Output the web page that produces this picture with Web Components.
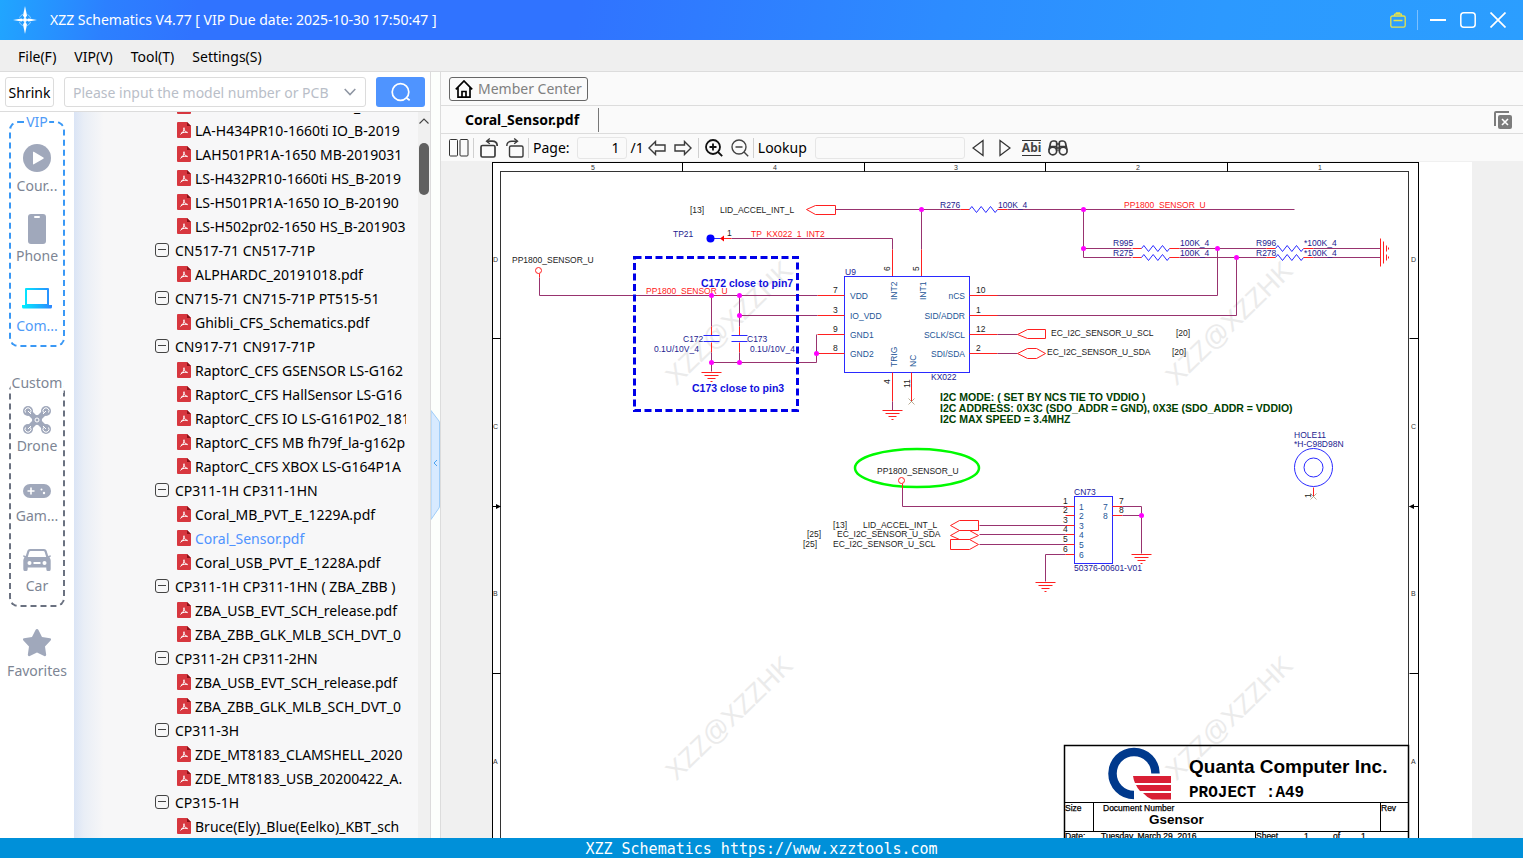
<!DOCTYPE html>
<html lang="en">
<head>
<meta charset="utf-8">
<title>XZZ Schematics</title>
<style>
  html, body { height: 100%; margin: 0; }
  body { font: 14px/20px "Noto Sans", "Open Sans", sans-serif; color: #000; background: #fff; overflow: hidden; }
</style>
</head>
<body>
<xzz-app></xzz-app>

<script>
const define = (name, html, setup) => {
  const template = document.createElement('template');
  template.innerHTML = html;
  customElements.define(name, class extends HTMLElement {
    constructor() {
      super();
      this.attachShadow({ mode: 'open' }).append(template.content.cloneNode(true));
    }
    connectedCallback() {
      if (setup && !this.ready) { this.ready = true; setup(this, this.shadowRoot); }
    }
  });
};

/* ---------- icons ---------- */
const ICONS = {
  logo: ['0 0 24 28', `<g fill="#fff"><path d="M12 0l2 9.5L12 13l-2-3.500z"/><path d="M12 28l2-9.500L12 15l-2 3.500z"/><path d="M0 14l8.500-1.600L11 14l-2.500 1.600z"/><path d="M24 14l-8.500-1.600L13 14l2.500 1.600z"/><circle cx="12" cy="14" r="2"/></g><circle cx="12" cy="14" r="6" fill="none" stroke="#8fd0ff" stroke-width="1" stroke-dasharray="5 4.400" stroke-dashoffset="-2"/>`],
  gift: ['0 0 16 16', `<g fill="none" stroke="#e6e24a" stroke-width="1.300"><rect x=".8" y="4" width="14.400" height="11.200" rx="1.600"/><path d="M4.500 4V2.800q0-.8.800-.8h5.400q.8 0 .8.800V4M6.500 2V.8h3V2M3.500 8.500h9"/></g>`],
  min: ['0 0 16 16', `<path d="M0 8h16" stroke="#fff" stroke-width="2"/>`],
  max: ['0 0 16 16', `<rect x=".8" y=".8" width="14.400" height="14.400" rx="3" fill="none" stroke="#fff" stroke-width="1.500"/>`],
  close: ['0 0 16 16', `<path d="M.5.500l15 15M15.500.500l-15 15" stroke="#fff" stroke-width="1.700"/>`],
  chevron: ['0 0 12 8', `<path d="M.7 1L6 6.600 11.300 1" fill="none" stroke="#8f96a3" stroke-width="1.500"/>`],
  search: ['0 0 20 20', `<g fill="none" stroke="#fff" stroke-width="1.700"><circle cx="9.500" cy="10" r="8.300"/><path d="M15.500 16l3.200 2.300"/></g>`],
  play: ['0 0 28 28', `<circle cx="14" cy="14" r="14" fill="#a0a8bb"/><path d="M10 8.200v11.600q0 .9.800.5l9.600-5.600q.8-.6 0-1.100l-9.600-5.800q-.8-.4-.8.400z" fill="#fff"/>`],
  phone: ['0 0 28 30', `<rect x="5" y="0" width="18" height="30" rx="3" fill="#a0a8bb"/><rect x="11" y="2" width="6" height="2" rx="1" fill="#fff"/>`],
  laptop: ['0 0 30 21', `<defs><linearGradient id="g"><stop offset="0" stop-color="#00f0ff"/><stop offset="1" stop-color="#2d86ff"/></linearGradient></defs><path fill="url(#g)" fill-rule="evenodd" d="M3 1q0-1 1-1h22q1 0 1 1v16H3zM5 2v14h20V2zM0 17h30v2q0 1.500-1.500 1.500h-27Q0 20.500 0 19z"/>`],
  drone: ['0 0 28 28', `<g fill="none" stroke="#a0a8bb"><g stroke-width="5.500" fill="#a0a8bb"><path d="M6 6l16 16M22 6L6 22"/></g><circle cx="14" cy="14" r="5" fill="#a0a8bb" stroke="none"/><circle cx="14" cy="14" r="2" stroke="#fff"/><g fill="#a0a8bb" stroke="none"><circle cx="5" cy="5" r="5"/><circle cx="23" cy="5" r="5"/><circle cx="5" cy="23" r="5"/><circle cx="23" cy="23" r="5"/></g><g stroke="#fff" stroke-width="1"><path d="M2.500 6.500a3 3 0 1 1 5 0M20.500 6.500a3 3 0 1 1 5 0M2.500 21.500a3 3 0 1 0 5 0M20.500 21.500a3 3 0 1 0 5 0M5 5l3 3M23 5l-3 3M5 23l3-3M23 23l-3-3"/></g></g>`],
  game: ['0 0 28 28', `<rect x="0" y="8" width="28" height="14" rx="7" fill="#a0a8bb"/><path d="M8 11.500v7M4.500 15h7" stroke="#fff" stroke-width="1.600"/><circle cx="18.500" cy="13.500" r="1" fill="#fff"/><circle cx="21" cy="17" r="1.200" fill="#fff"/>`],
  car: ['0 0 28 28', `<path fill="#a0a8bb" fill-rule="evenodd" d="M7 3h14q2 0 2.600 1.800L25.200 10l2.300-.8q.7.800 0 1.600l-1 .8q1.200 1.300 1.200 3V23q0 2-1.200 2h-2q-1.200 0-1.200-2v-1.500H4.700V23q0 2-1.200 2h-2Q.3 25 .3 23v-8.400q0-1.700 1.200-3l-1-.8q-.7-.8 0-1.600l2.300.8 1.600-5.200Q5 3 7 3zM7.600 5q-1 0-1.300 1l-1.500 5h18.400l-1.500-5q-.3-1-1.300-1z"/><g fill="#fff"><circle cx="6.500" cy="17" r="2"/><circle cx="21.500" cy="17" r="2"/><rect x="10.500" y="16" width="7" height="2"/></g>`],
  star: ['0 0 28 28', `<path fill="#a0a8bb" d="M14 0q1 0 1.600 1.200L19 8l8 1.300q1.800.7.600 2.200L22 17.500l1.200 8.300q-.2 1.900-2 1.200L14 23.500 6.800 27q-1.800.7-2-1.200L6 17.500.4 11.500Q-.8 10 1 9.300L9 8l3.400-6.800Q13 0 14 0z"/>`],
  pdf: ['0 0 14 16', `<path d="M1 0h9l4 4v11q0 1-1 1H1q-1 0-1-1V1q0-1 1-1z" fill="#d7373f"/><path d="M10 0l4 4h-4z" fill="#8c1219"/><path d="M7 5.500c-.4 2 .2 3.500 3.600 5.200M7 6c.4 2-.6 4-3.600 6.400M4 11.200q3-1.400 6.500-.9" fill="none" stroke="#fff" stroke-width="1"/>`],
  up: ['0 0 10 6', `<path d="M.5 5.500L5 1l4.500 4.500" fill="none" stroke="#444" stroke-width="1.100"/>`],
  home: ['0 0 18 18', `<path d="M.8 9.300L9 1l8.200 8.300M3 7.500v9.700h12V7.500M7 17v-5.500h4V17" fill="none" stroke="#000" stroke-width="1.700"/>`],
  closeall: ['0 0 18 18', `<path d="M1 15V2q0-1 1-1h13" fill="none" stroke="#7c7c7c" stroke-width="2"/><rect x="4" y="4" width="14" height="14" rx="2" fill="#7c7c7c"/><path d="M8 8l6 6M14 8l-6 6" stroke="#fff" stroke-width="1.600"/>`],
  pages: ['0 0 20 18', `<g fill="none" stroke="#333"><rect x=".5" y=".5" width="8" height="16.500" rx="1"/><rect x="11" y=".5" width="8" height="16.500" rx="1"/></g>`],
  rotl: ['0 0 18 20', `<g fill="none" stroke="#3a3a3a" stroke-width="1.700"><rect x="1" y="7.500" width="14" height="11.500" rx="1.500"/><path d="M17.200 8q0-4.800-5-4.800H7"/><path d="M9.800.5L6.500 3.200l3.300 2.600" stroke-width="1.300"/></g>`],
  rotr: ['0 0 18 20', `<g fill="none" stroke="#3a3a3a" stroke-width="1.400"><rect x="3.500" y="8" width="13.500" height="11" rx="1.500"/><path d="M.8 8q0-4.800 5-4.800H11"/><path d="M8.200.5l3.300 2.700-3.300 2.600"/></g>`],
  left: ['0 0 18 16', `<path d="M1 8l6.500-6.500V5H17v6H7.500v3.500z" fill="none" stroke="#3a3a3a" stroke-width="1.400"/>`],
  right: ['0 0 18 16', `<path d="M17 8l-6.500-6.500V5H1v6h9.500v3.500z" fill="none" stroke="#3a3a3a" stroke-width="1.400"/>`],
  zoomin: ['0 0 18 18', `<g fill="none" stroke="#111" stroke-width="1.800"><circle cx="8" cy="8" r="7"/><path d="M13 13l4.200 4.200M4.500 8h7M8 4.500v7"/></g>`],
  zoomout: ['0 0 18 18', `<g fill="none" stroke="#444" stroke-width="1.400"><circle cx="8" cy="8" r="7"/><path d="M13 13l4.200 4.200M4.500 8h7"/></g>`],
  prev: ['0 0 12 18', `<path d="M11 1.500v15L1 9z" fill="none" stroke="#333" stroke-width="1.300"/>`],
  next: ['0 0 12 18', `<path d="M1 1.500v15L11 9z" fill="none" stroke="#333" stroke-width="1.300"/>`],
  find: ['0 0 20 16', `<g fill="none" stroke="#3a3a3a" stroke-width="1.700"><circle cx="4.800" cy="11" r="3.900"/><circle cx="15.200" cy="11" r="3.900"/><path d="M1 10L2.500 3Q3 1 5 1h1.500Q8.700 1 8.700 3v8M19 10l-1.500-7Q17 1 15 1h-1.500q-2.200 0-2.200 2v8M8.700 4h2.600M8.700 8h2.600M2 6.500h6.700M11.300 6.500H18"/></g>`]
};
define('x-icon', `<style>:host{display:block;flex:none}svg{display:block;width:100%;height:100%}</style>`, (el, root) => {
  const [box, art] = ICONS[el.getAttribute('name')];
  const [, , w, h] = box.split(' ');
  el.style.width ||= w + 'px';
  el.style.height ||= h + 'px';
  root.innerHTML += `<svg viewBox="${box}" aria-hidden="true">${art}</svg>`;
});

/* ---------- title and menus ---------- */
define('title-bar', `<style>
  :host{display:flex;align-items:center;height:40px;box-sizing:border-box;padding:0 17px 0 13px;color:#fff;
    background:linear-gradient(100deg,#20a6ff 0,#2c80ff 7%,#3073ff 13%,#3073ff 38%,#2d8cff 62%,#2c99ff 80%,#2b9eff 100%)}
  h1{flex:1;margin:0 0 0 13px;font-size:14px;line-height:20px;font-weight:400;white-space:pre}
  button{all:unset;display:block;margin-left:14px}
  i{width:1px;height:20px;margin-left:11px;background:#7cc0ff}
  i + button{margin-left:12px}
</style>
<x-icon name="logo"></x-icon><h1><slot></slot></h1>
<button aria-label="Gift"><x-icon name="gift"></x-icon></button><i></i>
<button aria-label="Minimize"><x-icon name="min"></x-icon></button>
<button aria-label="Maximize"><x-icon name="max"></x-icon></button>
<button aria-label="Close"><x-icon name="close"></x-icon></button>`);

define('menu-bar', `<style>
  :host{display:flex;align-items:center;gap:18px;box-sizing:border-box;height:32px;padding:3px 18px 0;background:#efefef;border-bottom:1px solid #dcdcdc}
  button{all:unset}
</style><button>File(F)</button><button>VIP(V)</button><button>Tool(T)</button><button>Settings(S)</button>`);

/* ---------- left side ---------- */
define('search-row', `<style>
  :host{display:flex;align-items:center;height:39px;padding:0 5px;border-bottom:1px solid #dcdcdc;background:#fff}
  button{all:unset;box-sizing:border-box;height:30px;border-radius:3px}
  .shrink{width:49px;border:1px solid #dcdcdc;text-align:center;line-height:30px}
  label{display:flex;flex:1;align-items:center;box-sizing:border-box;height:30px;margin:0 10px;padding:0 9px 0 8px;border:1px solid #dcdcdc;border-radius:3px}
  input{flex:1;min-width:0;padding:2px 0 0;border:0;outline:0;background:none;font:inherit}
  input::placeholder{color:#b9bec8;opacity:1}
  .go{display:grid;place-items:center;width:49px;background:#4f94ff}
</style>
<button class="shrink">Shrink</button>
<label><input aria-label="Model number or PCB" placeholder="Please input the model number or PCB"><x-icon name="chevron"></x-icon></label>
<button class="go" aria-label="Search"><x-icon name="search"></x-icon></button>`);

define('rail-item', `<style>
  :host{display:block;color:#7d8594}
  :host([active]){color:#4f9bf8}
  button{all:unset;display:grid;width:100%;justify-items:center;gap:var(--icon-gap,4px)}
  div{display:grid;place-items:center;width:30px;height:28px}
</style><button><div></div><span><slot></slot></span></button>`, (el, root) => {
  root.querySelector('div').innerHTML = `<x-icon name="${el.getAttribute('icon')}"></x-icon>`;
});

define('rail-group', `<style>
  :host{display:grid;position:relative;gap:18px;box-sizing:border-box;width:56px;padding:21px 0 9px;border:2px dashed #3a98f5;border-radius:9px;color:#4f9bf8}
  :host([custom]){--icon-gap:2px;gap:20px;padding-top:22px;border-color:#6a7180;color:#7d8594}
  b{position:absolute;left:50%;top:-11px;padding:0 1px;transform:translateX(-50%);background:#fff;font-weight:400}
</style><b></b><slot></slot>`, (el, root) => {
  root.querySelector('b').textContent = el.getAttribute('label');
});

define('side-rail', `<style>
  :host{display:flex;flex-direction:column;align-items:center;width:74px;flex:none;padding-top:9px;box-sizing:border-box;background:#fff}
  rail-group[custom]{margin-top:35px}
  .fav{margin-top:22px}
</style>
<rail-group label="VIP">
  <rail-item icon="play">Cour...</rail-item><rail-item icon="phone">Phone</rail-item><rail-item icon="laptop" active>Com...</rail-item>
</rail-group>
<rail-group label="Custom" custom>
  <rail-item icon="drone">Drone</rail-item><rail-item icon="game">Gam...</rail-item><rail-item icon="car">Car</rail-item>
</rail-group>
<rail-item class="fav" icon="star">Favorites</rail-item>`);

define('tree-folder', `<style>
  :host{display:flex;align-items:center;gap:6px;height:24px;padding-left:81px;white-space:pre}
  button{all:unset;box-sizing:border-box;position:relative;width:14px;height:14px;border:1px solid #444;border-radius:3px;flex:none}
  button::after{content:"";position:absolute;left:2px;right:2px;top:5px;height:1px;background:#444}
  span{padding-top:2px}
</style><button aria-label="Collapse"></button><span><slot></slot></span>`);

define('tree-file', `<style>
  :host{display:flex;align-items:center;gap:4px;height:24px;padding-left:103px;white-space:pre}
  a{padding-top:2px;color:inherit;text-decoration:none}
  :host([selected]){color:#4f93ff}
</style><x-icon name="pdf"></x-icon><a href="#"><slot></slot></a>`);

define('tree-view', `<style>
  :host{display:flex;flex:1;min-width:0;background:linear-gradient(90deg,#dae4f5 0,#e9eef6 10px,#f7f7f8 30px)}
  .list{flex:1;min-width:0;margin-right:12px;overflow:hidden}
  .rows{margin-top:-18px}
  .bar{width:12px;background:#f0f0f0;display:flex;flex-direction:column;align-items:center}
  .bar x-icon{margin-top:6px}
  .thumb{width:10px;height:52px;margin-top:19px;border-radius:5px;background:#606060}
</style>
<div class="list"><div class="rows"><slot></slot></div></div>
<div class="bar"><x-icon name="up"></x-icon><div class="thumb"></div></div>`);

define('split-handle', `<style>
  :host{display:grid;place-content:center;flex:none;width:9px;padding-top:20px;border:solid #dcdcdc;border-width:0 1px;background:#fcfffc}
  button{all:unset;display:block}
  svg{display:block}
</style><button aria-label="Collapse panel"><svg width="9" height="110" viewBox="0 0 9 110"><path d="M0 .5L8 11q.5 1 .5 2v83q0 1-.5 2L0 109.500z" fill="#d8eaff" stroke="#9fcdf8"/><path d="M6 50L3 53l3 3" fill="none" stroke="#4da3f0"/></svg></button>`);

/* ---------- document side ---------- */
define('member-row', `<style>
  :host{display:flex;align-items:center;height:33px;padding:0 8px;border-bottom:1px solid #dcdcdc}
  button{all:unset;display:flex;align-items:center;gap:5px;box-sizing:border-box;height:24px;padding:0 5px;border:1px solid #666;border-radius:3px;color:#808080}
</style><button><x-icon name="home"></x-icon>Member Center</button>`);

define('doc-tabs', `<style>
  :host{display:flex;align-items:center;height:27px;padding-right:11px;border-bottom:1px solid #dcdcdc}
  button{all:unset}
  .tab{box-sizing:border-box;height:24px;padding:0 19px 0 24px;border-right:1px solid #777;font-weight:700;line-height:24px}
  .all{margin-left:auto}
</style><button class="tab"><slot></slot></button><button class="all" aria-label="Close all"><x-icon name="closeall"></x-icon></button>`);

define('doc-tools', `<style>
  :host{display:flex;align-items:center;height:27px;padding-left:8px}
  button{all:unset;display:block;flex:none}
  .set{display:flex;align-items:center;gap:8px}
  i{width:1px;height:20px;background:#d0d0d0;margin:0 6px}
  .tight{margin-left:4px}
  .label{margin:0 4px}
  input{box-sizing:border-box;height:22px;border:1px solid #e6e6e6;border-radius:3px;background:#fafafa;padding:0 6px;font:inherit;outline:0}
  .page{width:50px;margin:0 4px 0 7px;text-align:right}
  .look{width:150px;margin:0 7px 0 8px}
  .turn{margin-left:4px}
  .steps{gap:15px}
  .abi{font:700 12px/14px "Noto Sans",sans-serif;border:solid #333;border-width:1px 0;color:#444;margin:0 7px 0 11px}
</style>
<button aria-label="Two pages"><x-icon name="pages"></x-icon></button><i class="tight"></i>
<div class="set">
  <button aria-label="Rotate left"><x-icon name="rotl"></x-icon></button>
  <button aria-label="Rotate right"><x-icon name="rotr"></x-icon></button>
</div><i class="label"></i>
<label for="p">Page:</label><input class="page" id="p" value="1"><span>/1</span>
<div class="set turn">
  <button aria-label="Previous page"><x-icon name="left"></x-icon></button>
  <button aria-label="Next page"><x-icon name="right"></x-icon></button>
</div><i></i>
<div class="set">
  <button aria-label="Zoom in"><x-icon name="zoomin"></x-icon></button>
  <button aria-label="Zoom out"><x-icon name="zoomout"></x-icon></button>
</div><i class="label"></i>
<label for="q">Lookup</label><input class="look" id="q">
<div class="set steps">
  <button aria-label="Find previous"><x-icon name="prev"></x-icon></button>
  <button aria-label="Find next"><x-icon name="next"></x-icon></button>
</div>
<button class="abi">Abi</button>
<button aria-label="Find"><x-icon name="find"></x-icon></button>`);

/* The sheet is drawn on a grid of half pixels: 1960 units across a 980px page. */
define('schematic-sheet', `<style>
  :host{display:block;width:980px;flex:none;background:#fff}
  svg{display:block;width:100%;font-family:"Liberation Sans",Arial,sans-serif;font-size:17px}
  text{white-space:pre}
</style>`, (el, root) => {
  const WIRE = '#98336f', RED = '#ff2020', BLUE = '#2a2aff', NAVY = '#1c1c90', PIN = '#1d5596', INK = '#222';
  const X = v => (v - 492) * 2, Y = v => (v - 162) * 2;
  const out = [];
  const line = (color, w, ...p) => {
    const pts = [];
    for (let i = 0; i < p.length; i += 2) pts.push(`${X(p[i]) + 1},${Y(p[i + 1]) + 1}`);
    out.push(`<polyline points="${pts.join(' ')}" fill="none" stroke="${color}" stroke-width="${w}"/>`);
  };
  const wire = (...p) => line(WIRE, 2, ...p);
  const red = (...p) => line(RED, 2, ...p);
  const poly = (...p) => red(...p, p[0], p[1]);
  const text = (x, y, s, color = INK, extra = '') =>
    out.push(`<text x="${X(x)}" y="${Y(y)}" fill="${color}" ${extra}>${s}</text>`);
  const end = (x, y, s, color) => text(x, y, s, color, 'text-anchor="end"');
  const up = (x, y, s, color) => text(x, y, s, color, `transform="rotate(-90 ${X(x)} ${Y(y)})"`);
  const circle = (x, y, r, fill, stroke, w = 2) =>
    out.push(`<circle cx="${X(x) + 1}" cy="${Y(y) + 1}" r="${r}" fill="${fill}" stroke="${stroke}" stroke-width="${w}"/>`);
  const dot = (x, y) => circle(x, y, 5, '#f0f', 'none');
  const box = (x, y, w, h, color, sw, extra = '') =>
    out.push(`<rect x="${X(x) + 1}" y="${Y(y) + 1}" width="${w * 2}" height="${h * 2}" fill="none" stroke="${color}" stroke-width="${sw}" ${extra}/>`);
  const ground = (x, y) => [10, 7, 4, 1].forEach((w, i) => line(RED, 2, x - w, y + i * 3, x + w, y + i * 3));
  const resistor = (x, y, w = 28) => {
    red(x - 9, y, x, y);
    const p = [x, y];
    for (let i = 0; i < 6; i++) p.push(x + w * (2 * i + 1) / 12, y + (i % 2 ? 3 : -3));
    line(BLUE, 2, ...p, x + w, y);
    red(x + w, y, x + w + 10, y);
  };
  const cross = (x, y) => { line('#a09070', 1.5, x - 3, y - 3, x + 3, y + 3); line('#a09070', 1.5, x - 3, y + 3, x + 3, y - 3); };

  /* watermarks */
  for (const [x, y] of [[729, 323], [1229, 323], [729, 718], [1229, 718]])
    text(x, y, 'XZZ@XZZHK', '#ebebeb', `font-size="53" text-anchor="middle" dominant-baseline="central" transform="rotate(-44 ${X(x)} ${Y(y)})"`);

  /* frame */
  box(492, 162, 926, 740, '#000', 2);
  box(500, 171, 908, 731, '#333', 2);
  for (const x of [682, 864, 1045, 1227]) line('#000', 2, x, 162, x, 171);
  for (const y of [338, 506, 673]) { line('#000', 2, 492, y, 500, y); line('#000', 2, 1409, y, 1418, y); }
  [5, 4, 3, 2, 1].forEach((n, i) => text(591 + i * 182 - (i > 1 ? 1 : 0), 170, n, '#333', 'font-size="14"'));
  ['D', 'C', 'B', 'A'].forEach((n, i) => { for (const x of [493, 1411]) text(x, [262, 429, 596, 764][i], n, '#333', 'font-size="14"'); });
  out.push(`<path d="M${X(501)} ${Y(506) + 1}l-10 -5v10zM${X(1409)} ${Y(506) + 1}l10 -5v10z"/>`);

  /* interrupt nets */
  text(690, 213, '[13]'); text(720, 213, 'LID_ACCEL_INT_L');
  poly(806, 209, 815, 205, 835, 205, 835, 214, 815, 214);
  wire(835, 209, 960, 209); resistor(969, 209); wire(1007, 209, 1294, 209);
  text(940, 208, 'R276', NAVY); text(998, 208, '100K_4', NAVY);
  text(1124, 208, 'PP1800_SENSOR_U', RED);
  text(673, 237, 'TP21', NAVY); text(727, 236, '1'); text(751, 237, 'TP_KX022_1_INT2', RED);
  line(BLUE, 2, 711, 238, 721, 238); circle(710, 238, 8, '#00f', 'none');
  wire(731, 238, 892, 238, 892, 249); red(722, 238, 731, 238); red(892, 249, 892, 276);
  out.push(`<path d="M${X(720)} ${Y(238) + 1}l8 -6v12z" fill="red"/>`);
  wire(921, 209, 921, 249); red(921, 249, 921, 276);

  /* pull resistors */
  wire(1083, 209, 1083, 257, 1131, 257); wire(1083, 248, 1131, 248);
  for (const y of [248, 257]) {
    resistor(1141, y); wire(1179, y, 1266, y); resistor(1275, y); wire(1313, y, 1380, y);
    line(RED, 2, 1386, y - 3, 1386, y + 3); line(RED, 2, 1388, y - 1, 1388, y + 1);
  }
  line(RED, 2, 1380, 238, 1380, 266); line(RED, 2, 1383, 241, 1383, 263);
  [['R995', '100K_4', 'R996', 246], ['R275', '100K_4', 'R278', 256]].forEach(([a, b, c, y]) => {
    text(1113, y, a, NAVY); text(1180, y, b, NAVY); text(1256, y, c, NAVY); text(1304, y, '*100K_4', NAVY);
  });
  wire(969, 295, 1217, 295, 1217, 248); wire(969, 315, 1236, 315, 1236, 257);

  /* supply and decoupling */
  text(512, 263, 'PP1800_SENSOR_U');
  wire(539, 277, 539, 295, 817, 295); red(539, 273, 539, 277); circle(538, 270, 6, '#fff', RED);
  text(646, 294, 'PP1800_SENSOR_U', RED);
  wire(739, 315, 817, 315);
  for (const x of [711, 739]) {
    wire(x, 295, x, 326); red(x, 326, x, 335); red(x, 342, x, 352); wire(x, 352, x, 362);
    line(BLUE, 2, x - 8, 335, x + 8, 335); line(BLUE, 2, x - 8, 341, x + 8, 341);
  }
  wire(711, 362, 816, 362, 816, 334); wire(711, 362, 711, 371); ground(711, 372);
  text(683, 342, 'C172', NAVY); text(654, 352, '0.1U/10V_4', NAVY);
  text(747, 342, 'C173', NAVY); text(750, 352, '0.1U/10V_4', NAVY);
  box(634, 257, 163, 153, '#0000e8', 6, 'stroke-dasharray="14 7"');
  text(701, 287, 'C172 close to pin7', '#1010dd', 'font-size="21" font-weight="700"');
  text(692, 392, 'C173 close to pin3', '#1010dd', 'font-size="21" font-weight="700"');

  /* accelerometer */
  box(844, 276, 125, 96, BLUE, 2);
  text(845, 275, 'U9', NAVY); text(931, 380, 'KX022', NAVY);
  [['7', 'VDD', 295], ['3', 'IO_VDD', 315], ['9', 'GND1', 334], ['8', 'GND2', 353]].forEach(([n, s, y]) => {
    red(817, y, 844, y); text(833, y - 2, n); text(850, y + 4, s, PIN);
  });
  [['10', 'nCS', 295], ['1', 'SID/ADDR', 315], ['12', 'SCLK/SCL', 334], ['2', 'SDI/SDA', 353]].forEach(([n, s, y]) => {
    red(969, y, 997, y); text(976, y - 2, n); end(965, y + 4, s, PIN);
  });
  up(897, 300, 'INT2', PIN); up(926, 300, 'INT1', PIN); up(897, 367, 'TRIG', PIN); up(916, 367, 'NC', PIN);
  up(890, 271, '6'); up(919, 271, '5'); up(890, 384, '4'); up(910, 388, '11');
  red(892, 372, 892, 401); wire(892, 401, 892, 410); ground(892, 410);
  red(911, 372, 911, 401); cross(911, 401);
  wire(997, 334, 1017, 334); poly(1017, 334, 1027, 329, 1045, 329, 1045, 338, 1027, 338);
  wire(997, 353, 1017, 353); poly(1017, 353, 1027, 348, 1036, 348, 1045, 353, 1036, 358, 1027, 358);
  text(1051, 336, 'EC_I2C_SENSOR_U_SCL'); text(1176, 336, '[20]');
  text(1047, 355, 'EC_I2C_SENSOR_U_SDA'); text(1172, 355, '[20]');
  ['I2C MODE: ( SET BY NCS TIE TO VDDIO )', 'I2C ADDRESS: 0X3C (SDO_ADDR = GND), 0X3E (SDO_ADDR = VDDIO)', 'I2C MAX SPEED = 3.4MHZ']
    .forEach((s, i) => text(940, 401 + i * 11, s, '#004000', 'font-size="21" font-weight="700"'));

  /* mounting hole */
  text(1294, 438, 'HOLE11', NAVY); text(1294, 447, '*H-C98D98N', NAVY);
  circle(1313, 467, 38, 'none', BLUE); circle(1313, 467, 19, 'none', BLUE);
  red(1313, 487, 1313, 496); cross(1313, 496); up(1311, 498, '1');

  /* connector */
  out.push(`<ellipse cx="${X(917)}" cy="${Y(468)}" rx="124" ry="38" fill="none" stroke="#00fa00" stroke-width="5"/>`);
  text(877, 474, 'PP1800_SENSOR_U');
  wire(902, 487, 902, 506, 1065, 506); red(902, 483, 902, 488); circle(901, 480, 6, '#fff', RED);
  box(1074, 496, 38, 67, BLUE, 2);
  text(1074, 495, 'CN73', NAVY); text(1074, 571, '50376-00601-V01', NAVY);
  [506, 515, 525, 534, 544, 554].forEach((y, i) => {
    red(1065, y, 1074, y); text(1063, y - 2, i + 1); text(1079, y + 4, i + 1, PIN);
  });
  [506, 515].forEach((y, i) => { red(1112, y, 1122, y); wire(1122, y, 1141, y); text(1119, y - 2, i + 7); text(1103, y + 4, i + 7, PIN); });
  wire(1141, 506, 1141, 553); ground(1141, 554);
  wire(979, 525, 1065, 525); wire(979, 534, 1065, 534); wire(979, 544, 1065, 544);
  poly(950, 525, 959, 520, 978, 520, 978, 530, 959, 530);
  poly(950, 535, 959, 530, 969, 530, 978, 535, 969, 539, 959, 539);
  poly(950, 539, 969, 539, 978, 544, 969, 549, 950, 549);
  wire(1065, 554, 1045, 554, 1045, 581); ground(1045, 582);
  text(833, 528, '[13]'); text(863, 528, 'LID_ACCEL_INT_L');
  text(807, 537, '[25]'); text(837, 537, 'EC_I2C_SENSOR_U_SDA');
  text(803, 547, '[25]'); text(833, 547, 'EC_I2C_SENSOR_U_SCL');
  [[921, 209], [1083, 209], [1083, 248], [1217, 248], [1236, 257], [711, 295], [739, 295], [739, 315], [711, 362], [739, 362], [816, 353], [1141, 515]]
    .forEach(p => dot(...p));

  /* title block */
  box(1064, 745, 344, 157, '#000', 3);
  line('#000', 2, 1064, 802, 1408, 802); line('#000', 2, 1064, 831, 1408, 831);
  line('#000', 2, 1093, 802, 1093, 831); line('#000', 2, 1380, 802, 1380, 831); line('#000', 2, 1255, 831, 1255, 850);
  out.push(`<path d="M${X(1134)} ${Y(795)}a43 43 0 1 1 43 -43" fill="none" stroke="#00398c" stroke-width="17"/>`);
  out.push(`<path fill="#d91f35" d="M${X(1133)} ${Y(776)}H${X(1171)}v14H${X(1135)}q-3 -7 -4 -14zM${X(1136)} ${Y(785)}H${X(1171)}v12H${X(1140)}q-5 -5 -8 -12zM${X(1143)} ${Y(793)}H${X(1171)}v13H${X(1152)}q-10 -4 -18 -13z"/>`);
  text(1189, 773, 'Quanta Computer Inc.', '#000', 'font-size="38" font-weight="700"');
  text(1189, 797, 'PROJECT :A49', '#000', 'font-size="32" font-weight="700" font-family="Liberation Mono, monospace"');
  text(1149, 824, 'Gsensor', '#000', 'font-size="27" font-weight="700"');
  for (const [x, y, s] of [[1065, 811, 'Size'], [1103, 811, 'Document Number'], [1381, 811, 'Rev'], [1065, 839, 'Date:'], [1101, 839, 'Tuesday, March 29, 2016'], [1256, 839, 'Sheet'], [1304, 839, '1'], [1333, 839, 'of'], [1361, 839, '1']])
    text(x, y, s, '#000', 'stroke="#000" stroke-width="0.5"');

  root.innerHTML += `<svg viewBox="0 0 1960 1480" role="img" aria-label="Coral sensor schematic">${out.join('')}</svg>`;
});

define('doc-viewer', `<style>
  :host{display:flex;flex:1;min-height:0;justify-content:center;align-items:flex-start;overflow:hidden;padding-top:1px;background:#f0f0f0}
</style><slot></slot>`);

define('status-bar', `<style>
  :host{display:block;box-sizing:border-box;height:20px;padding-top:1px;background:#0090d9;color:#fff;text-align:center;font:15px/20px "DejaVu Sans Mono","Liberation Mono",monospace}
</style><slot></slot>`);

/* ---------- application ---------- */
const TREE = [
  ['f', 'LA-H432PR10-1660ti MB_B-201'],
  ['f', 'LA-H434PR10-1660ti IO_B-2019'], ['f', 'LAH501PR1A-1650 MB-2019031'],
  ['f', 'LS-H432PR10-1660ti HS_B-2019'], ['f', 'LS-H501PR1A-1650 IO_B-20190'],
  ['f', 'LS-H502pr02-1650 HS_B-201903'],
  ['d', 'CN517-71 CN517-71P'], ['f', 'ALPHARDC_20191018.pdf'],
  ['d', 'CN715-71 CN715-71P PT515-51'], ['f', 'Ghibli_CFS_Schematics.pdf'],
  ['d', 'CN917-71 CN917-71P'], ['f', 'RaptorC_CFS GSENSOR LS-G162'], ['f', 'RaptorC_CFS HallSensor LS-G16'],
  ['f', 'RaptorC_CFS IO LS-G161P02_181'], ['f', 'RaptorC_CFS MB fh79f_la-g162p'], ['f', 'RaptorC_CFS XBOX LS-G164P1A'],
  ['d', 'CP311-1H CP311-1HN'], ['f', 'Coral_MB_PVT_E_1229A.pdf'], ['s', 'Coral_Sensor.pdf'], ['f', 'Coral_USB_PVT_E_1228A.pdf'],
  ['d', 'CP311-1H CP311-1HN ( ZBA_ZBB )'], ['f', 'ZBA_USB_EVT_SCH_release.pdf'], ['f', 'ZBA_ZBB_GLK_MLB_SCH_DVT_0'],
  ['d', 'CP311-2H CP311-2HN'], ['f', 'ZBA_USB_EVT_SCH_release.pdf'], ['f', 'ZBA_ZBB_GLK_MLB_SCH_DVT_0'],
  ['d', 'CP311-3H'], ['f', 'ZDE_MT8183_CLAMSHELL_2020'], ['f', 'ZDE_MT8183_USB_20200422_A.'],
  ['d', 'CP315-1H'], ['f', 'Bruce(Ely)_Blue(Eelko)_KBT_sch']
];
define('xzz-app', `<style>
  :host{display:flex;flex-direction:column;height:100vh}
  main{display:flex;flex:1;min-height:0}
  aside{display:flex;flex-direction:column;flex:none;width:430px}
  .body{display:flex;flex:1;min-height:0}
  section{display:flex;flex-direction:column;flex:1;min-width:0;background:#fafafa}
</style>
<title-bar>XZZ Schematics V4.77 [ VIP Due date: 2025-10-30 17:50:47 ]</title-bar>
<menu-bar></menu-bar>
<main>
  <aside>
    <search-row></search-row>
    <div class="body"><side-rail></side-rail><tree-view></tree-view></div>
  </aside>
  <split-handle></split-handle>
  <section>
    <member-row></member-row>
    <doc-tabs>Coral_Sensor.pdf</doc-tabs>
    <doc-tools></doc-tools>
    <doc-viewer><schematic-sheet></schematic-sheet></doc-viewer>
  </section>
</main>
<status-bar>XZZ Schematics https://www.xzztools.com</status-bar>`, (el, root) => {
  root.querySelector('tree-view').innerHTML = TREE.map(([kind, name]) =>
    kind === 'd' ? `<tree-folder>${name}</tree-folder>` : `<tree-file${kind === 's' ? ' selected' : ''}>${name}</tree-file>`).join('');
});
</script>
</body>
</html>
